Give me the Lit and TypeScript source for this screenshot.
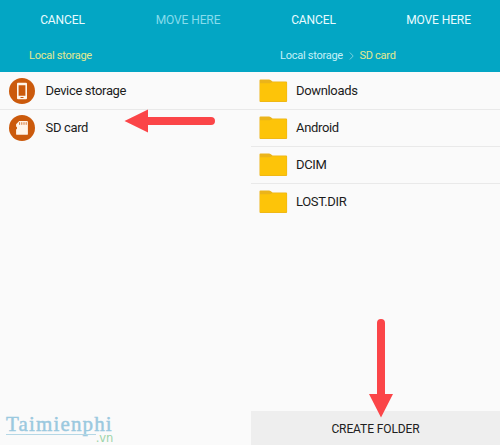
import { LitElement, html, css, svg } from "lit";
import { customElement, property } from "lit/decorators.js";
import { classMap } from "lit/directives/class-map.js";

const icons: Record<string, unknown> = {
  device: svg`<svg width="26" height="26" viewBox="0 0 26 26">
    <circle cx="13" cy="13" r="13" fill="#cb5a0c"/>
    <path fill-rule="evenodd" fill="#fff5ea" d="M9 4.7h8q1 0 1 1v14.6q0 1-1 1H9q-1 0-1-1V5.7q0-1 1-1zM9.6 7.2v10.5h6.8V7.2zM11.5 19v1h3v-1z"/>
  </svg>`,
  card: svg`<svg width="26" height="26" viewBox="0 0 26 26">
    <circle cx="13" cy="13" r="13" fill="#cb5a0c"/>
    <path fill="#fff5ea" d="M10.2 6h7.8q.9 0 .9.9v12q0 .9-.9.9H8q-.9 0-.9-.9v-4.4l.9-.8v-1.4l-.9-.7V9.2z"/>
    <path stroke="#cb5a0c" stroke-width=".8" d="M10.6 7.2v2.6M12.8 7.2v2.6M15 7.2v2.6M17.2 7.2v2.6"/>
  </svg>`,
  folder: svg`<svg width="29" height="24" viewBox="0 0 29 24">
    <path fill="#ebb41a" d="M.5 1.6Q.5 .6 1.5 .6h8.6q.8 0 1.4.5l2.1 1.5h13.5q1 0 1 1v18.4q0 1-1 1H1.5q-1 0-1-1z"/>
    <path fill="#fdc409" d="M1 4.2h9.8q.8 0 1.4-.4l.9-.5h14q.5 0 .5.6v17.7q0 .6-.6.6H1.6q-.6 0-.6-.6z"/>
  </svg>`,
};

@customElement("file-row")
class FileRow extends LitElement {
  @property() icon = "folder";
  @property() name = "";
  static styles = css`
    :host { display: flex; align-items: center; box-sizing: border-box; height: 37px; }
    .icon { display: flex; width: 37px; flex: none; }
    .name { font-size: 13px; line-height: 18px; letter-spacing: -.34px; color: #1c1c1c; white-space: nowrap; padding-top: 1px; }
  `;
  render() {
    return html`<span class="icon">${icons[this.icon]}</span><span class="name">${this.name}</span>`;
  }
}

@customElement("app-root")
class AppRoot extends LitElement {
  static styles = css`
    :host {
      display: flex; position: relative; width: 500px; height: 445px; overflow: hidden;
      background: #fafafa; font-family: Roboto, "Liberation Sans", sans-serif;
    }
    .panel { display: flex; flex-direction: column; width: 251px; flex: none; }
    .panel.right { width: 249px; }
    .header { height: 72px; background: #03a6c4; color: #e9fbff; flex: none; }
    .actions { display: grid; grid-template-columns: 125px 126px; height: 40px; align-items: center; text-align: center; font-size: 12px; letter-spacing: -.1px; white-space: nowrap; }
    .right .actions { grid-template-columns: 125px 125px; }
    .disabled { color: #87dcec; }
    .crumbs { display: flex; align-items: center; height: 31px; padding-left: 29px; font-size: 11px; letter-spacing: -.26px; white-space: nowrap; color: #c5f1f7; }
    .crumbs svg { margin: 0 5px 0 6.5px; }
    .current { color: #e3e990; }
    .list { display: flex; flex-direction: column; padding-top: .5px; }
    file-row { padding-left: 8.5px; border-bottom: 1px solid #e9e9e9; }
    .right file-row { padding-left: 8px; }
    file-row:last-child { border-bottom-color: transparent; }
    .create { margin-top: auto; height: 34px; background: #eee; color: #202020; font-size: 12px; letter-spacing: -.1px; line-height: 36px; text-align: center; }
    .arrow { position: absolute; }
    .to-card { left: 124px; top: 108px; }
    .to-create { left: 368px; top: 318px; }
    .brand { position: absolute; left: 6px; top: 412px; width: 107px; color: #9bc9df; font-family: "Liberation Serif", serif; }
    .brand-name { display: block; height: 22px; font-size: 21px; line-height: 25px; letter-spacing: 1.15px; -webkit-text-stroke: .45px #9bc9df; white-space: nowrap; }
    .brand-foot { display: flex; }
    .rule { flex: 1; height: 1px; background: #b5d7e5; }
    .brand-zone { font: 11.5px/9px "DejaVu Sans", sans-serif; letter-spacing: -.2px; color: #9dd4a9; }
  `;
  header(path: string[], canMove: boolean) {
    return html`<div class="header">
      <div class="actions"><span>CANCEL</span><span class=${classMap({ disabled: !canMove })}>MOVE HERE</span></div>
      <div class="crumbs">${path.map((part, i) => html`${i ? html`<svg width="5" height="8" viewBox="0 0 5 8"><path d="M.8.5 4.2 4 .8 7.5" fill="none" stroke="#78cfdd"/></svg>` : ""}<span class=${classMap({ current: i === path.length - 1 })}>${part}</span>`)}</div>
    </div>`;
  }
  render() {
    return html`
      <section class="panel">
        ${this.header(["Local storage"], false)}
        <div class="list">
          <file-row icon="device" name="Device storage"></file-row>
          <file-row icon="card" name="SD card"></file-row>
        </div>
      </section>
      <section class="panel right">
        ${this.header(["Local storage", "SD card"], true)}
        <div class="list">
          ${["Downloads", "Android", "DCIM", "LOST.DIR"].map((n) => html`<file-row name=${n}></file-row>`)}
        </div>
        <div class="create">CREATE FOLDER</div>
      </section>
      <svg class="arrow to-card" width="92" height="26" viewBox="0 0 92 26">
        <path fill="#fb4548" d="M.5 13 24 1.5V9h63a4 4 0 0 1 0 8H24v7.5z"/>
      </svg>
      <svg class="arrow to-create" width="26" height="100" viewBox="0 0 26 100">
        <path fill="#fb4548" d="M13 99.5 1 76h8V5a4 4 0 0 1 8 0v71h8z"/>
      </svg>
      <div class="brand"><span class="brand-name">Taimienphi</span><div class="brand-foot"><span class="rule"></span><span class="brand-zone">.vn</span></div></div>
    `;
  }
}
